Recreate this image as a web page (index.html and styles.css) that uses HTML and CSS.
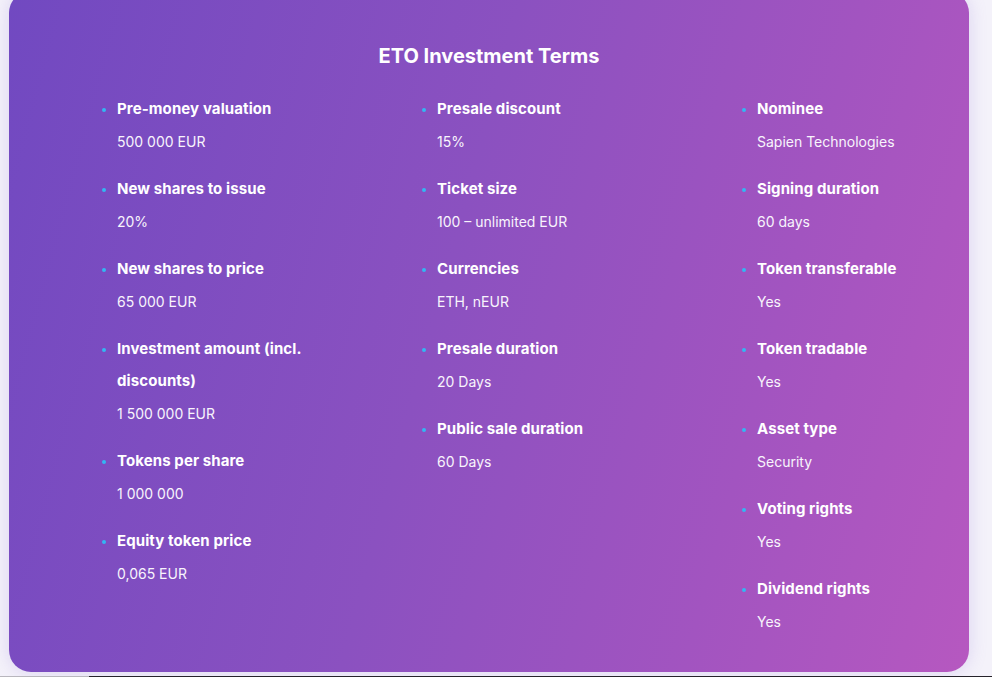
FILE: index.html
```html
<!DOCTYPE html>
<html lang="en">
<head>
<meta charset="utf-8">
<title>ETO Investment Terms</title>
<link rel="stylesheet" href="styles.css">
</head>
<body>
<section class="card">
  <h2 class="title">ETO Investment Terms</h2>
  <div class="columns">
    <ul class="terms">
      <li><span class="label">Pre-money valuation</span><span class="value">500 000 EUR</span></li>
      <li><span class="label">New shares to issue</span><span class="value">20%</span></li>
      <li><span class="label">New shares to price</span><span class="value">65 000 EUR</span></li>
      <li><span class="label">Investment amount (incl. discounts)</span><span class="value">1 500 000 EUR</span></li>
      <li><span class="label">Tokens per share</span><span class="value">1 000 000</span></li>
      <li><span class="label">Equity token price</span><span class="value">0,065 EUR</span></li>
    </ul>
    <ul class="terms">
      <li><span class="label">Presale discount</span><span class="value">15%</span></li>
      <li><span class="label">Ticket size</span><span class="value">100 – unlimited EUR</span></li>
      <li><span class="label">Currencies</span><span class="value">ETH, nEUR</span></li>
      <li><span class="label">Presale duration</span><span class="value">20 Days</span></li>
      <li><span class="label">Public sale duration</span><span class="value">60 Days</span></li>
    </ul>
    <ul class="terms">
      <li><span class="label">Nominee</span><span class="value">Sapien Technologies</span></li>
      <li><span class="label">Signing duration</span><span class="value">60 days</span></li>
      <li><span class="label">Token transferable</span><span class="value">Yes</span></li>
      <li><span class="label">Token tradable</span><span class="value">Yes</span></li>
      <li><span class="label">Asset type</span><span class="value">Security</span></li>
      <li><span class="label">Voting rights</span><span class="value">Yes</span></li>
      <li><span class="label">Dividend rights</span><span class="value">Yes</span></li>
    </ul>
  </div>
</section>
<div class="bottom-line"></div>
</body>
</html>
```
FILE: styles.css
```css
html, body {
  margin: 0;
  padding: 0;
}
body {
  background: #f4f2fa;
  overflow: hidden;
  height: 677px;
  font-family: Inter, "Noto Sans", sans-serif;
}
.card {
  box-sizing: border-box;
  width: 960px;
  height: 681px;
  margin: -9px 0 0 9px;
  padding: 49px 0 0 0;
  border-radius: 22px;
  background: linear-gradient(105deg, #7149c1 0%, #8b51c0 45%, #a254c0 75%, #b658c0 100%);
  box-shadow: 0 0 18px rgba(130, 100, 210, 0.22);
  color: #ffffff;
}
.title {
  margin: 0;
  text-align: center;
  font-size: 20px;
  line-height: 32px;
  font-weight: 700;
  letter-spacing: 0;
}
.columns {
  display: grid;
  grid-template-columns: 320px 320px 200px;
  margin: 21px 0 0 91px;
}
.terms {
  list-style: none;
  margin: 0;
  padding: 0;
}
.terms li {
  position: relative;
  padding-left: 17px;
  margin-bottom: 16px;
  display: flex;
  flex-direction: column;
}
.terms li::before {
  content: "";
  position: absolute;
  left: 2px;
  top: 15px;
  width: 4px;
  height: 4px;
  border-radius: 50%;
  background: #33b6f2;
}
.label {
  font-size: 15px;
  font-weight: 700;
  line-height: 32px;
  letter-spacing: 0.1px;
  max-width: 200px;
}
.value {
  font-size: 14px;
  line-height: 32px;
  color: #f8f4fc;
  position: relative;
  top: 1px;
}
.bottom-line {
  margin-top: 4px;
  height: 1px;
  background: linear-gradient(90deg, #b8b6bd 0, #b8b6bd 89px, #26232b 89px);
}
```
